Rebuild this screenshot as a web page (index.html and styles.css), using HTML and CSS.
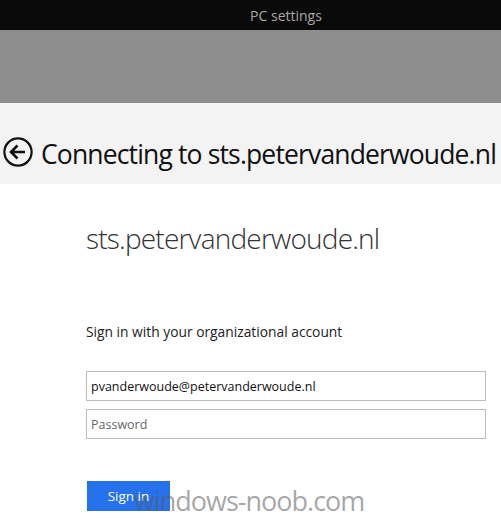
FILE: index.html
```html
<!DOCTYPE html>
<html>
<head>
<meta charset="utf-8">
<link rel="stylesheet" href="styles.css">
</head>
<body>
<div class="titlebar"><span class="apptitle">PC settings</span></div>
<div class="grayband"></div>
<div class="header">
  <svg class="back" width="32" height="32" viewBox="0 0 32 32">
    <circle cx="16" cy="16" r="13.6" fill="none" stroke="#111" stroke-width="2.2"/>
    <path d="M9 16 H23 M15.5 9.5 L9 16 L15.5 22.5" fill="none" stroke="#111" stroke-width="2.6"/>
  </svg>
  <h1 class="pagetitle">Connecting to sts.petervanderwoude.nl</h1>
</div>
<div class="content">
  <div class="domain">sts.petervanderwoude.nl</div>
  <div class="prompt">Sign in with your organizational account</div>
  <div class="field">pvanderwoude@petervanderwoude.nl</div>
  <div class="field placeholder">Password</div>
  <div class="actions">
    <div class="btn">Sign in</div>
    <div class="watermark">windows-noob.com</div>
  </div>
</div>
</body>
</html>
```
FILE: styles.css
```css
html, body {
  margin: 0;
  padding: 0;
  background: #ffffff;
  font-family: "Open Sans", "Noto Sans", sans-serif;
  overflow: hidden;
}
.titlebar {
  height: 30px;
  background: #0a0a0a;
  display: flex;
  align-items: center;
  justify-content: center;
}
.apptitle {
  color: #a8a8a8;
  font-size: 14px;
  margin-left: 71px;
}
.grayband {
  height: 73px;
  background: #8e8e8e;
}
.header {
  height: 81px;
  background: #f3f3f3;
  display: flex;
  align-items: flex-start;
  padding: 33px 0 0 2px;
  box-sizing: border-box;
}
.back {
  flex: none;
  margin-right: 7px;
}
.pagetitle {
  margin: 0;
  font-weight: 400;
  font-size: 26.5px;
  line-height: 36px;
  color: #111;
  letter-spacing: -0.85px;
  white-space: nowrap;
}
.content {
  padding-left: 86px;
  padding-right: 15px;
}
.domain {
  margin-top: 38px;
  font-size: 28px;
  font-weight: 300;
  color: #333;
  letter-spacing: -0.8px;
  line-height: 32px;
}
.prompt {
  margin-top: 69px;
  font-size: 13.8px;
  color: #222;
  line-height: 18px;
}
.field {
  margin-top: 30px;
  height: 30px;
  border: 1px solid #bdbdbd;
  box-sizing: border-box;
  padding-left: 4px;
  display: flex;
  align-items: center;
  font-size: 12.5px;
  color: #111;
}
.field + .field {
  margin-top: 8px;
}
.placeholder {
  color: #666;
}
.actions {
  margin-top: 42px;
  position: relative;
  height: 37px;
}
.btn {
  width: 83px;
  height: 30px;
  background: #2672ec;
  color: #fff;
  font-size: 13.5px;
  display: flex;
  align-items: center;
  justify-content: center;
  margin-left: 1px;
}
.watermark {
  position: absolute;
  left: 48px;
  top: 3px;
  font-size: 27px;
  color: rgba(90, 90, 90, 0.55);
  letter-spacing: -1px;
  line-height: 34px;
  white-space: nowrap;
}
```
